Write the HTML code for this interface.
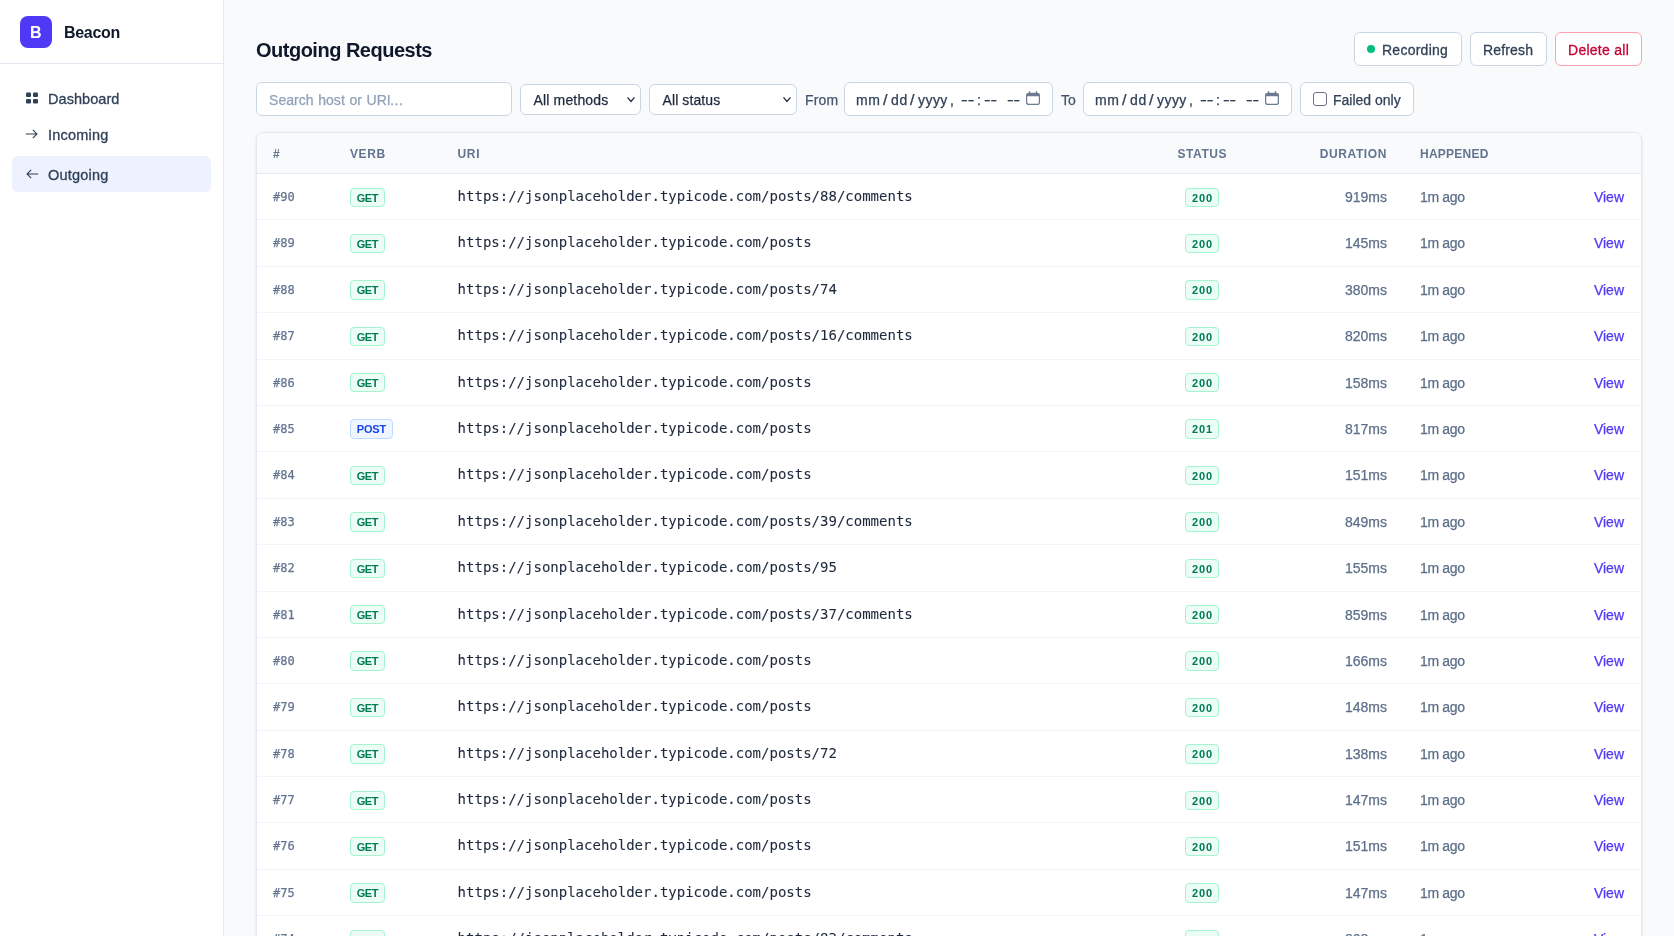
<!DOCTYPE html>
<html lang="en">
<head>
<meta charset="utf-8">
<title>Beacon – Outgoing Requests</title>
<style>
*{box-sizing:border-box;margin:0;padding:0}
html,body{width:1674px;height:936px;overflow:hidden}
body{background:#f8fafc;font-family:"Liberation Sans",sans-serif;color:#314158;position:relative;font-size:14px;-webkit-text-stroke:.25px}
.abs{position:absolute;white-space:nowrap}
/* sidebar */
.sidebar{position:absolute;left:0;top:0;width:224px;height:936px;background:#fff;border-right:1px solid #e2e8f0}
.brand{position:absolute;left:0;top:0;width:223px;height:64px;border-bottom:1px solid #e2e8f0}
.logo{position:absolute;left:20px;top:16px;width:32px;height:32px;border-radius:8px;background:#4f39f6;color:#fff;font-weight:700;font-size:16px;line-height:34px;text-align:center;text-indent:-0.5px}
.brandname{position:absolute;left:64px;top:21px;letter-spacing:-0.3px;height:24px;line-height:24px;font-size:16px;font-weight:700;color:#0f172b;white-space:nowrap}
.nav{position:absolute;left:12px;width:199px;height:36px;border-radius:6px;font-size:14px;font-weight:400;color:#314158}
.nav.active{background:#eef2ff}
.nav svg{position:absolute;left:13px;display:block}
.nav span{position:absolute;left:36px;top:0;height:36px;line-height:36px;white-space:nowrap;font-size:14.5px;letter-spacing:.2px;-webkit-text-stroke:0.3px #314158}
/* main */
main{position:absolute;left:224px;top:0;width:1450px;height:936px}
h1{position:absolute;left:32px;top:35px;letter-spacing:-0.5px;height:30px;line-height:30px;font-size:20px;font-weight:700;color:#0f172b;white-space:nowrap}
.btn{position:absolute;top:32px;height:34px;border:1px solid #cad5e2;border-radius:6px;background:#fff;font-size:14px;line-height:34px;color:#314158;white-space:nowrap}
.btn span{position:absolute;top:0;line-height:34px;-webkit-text-stroke:0.3px currentColor}
.btn.danger{border-color:#ffa1ad;color:#c70036}
.dot{position:absolute;left:12px;top:12px;width:8px;height:8px;border-radius:50%;background:#00bc7d}
.field{position:absolute;background:#fff;border:1px solid #cad5e2;border-radius:6px;font-size:14px;white-space:nowrap}
.field span{position:absolute;top:0;white-space:nowrap}
.lbl{position:absolute;top:83px;height:34px;line-height:34px;font-size:14px;color:#45556c;white-space:nowrap}
.chk{position:absolute;left:12px;top:9px;width:14px;height:14px;border:1px solid #746e80;border-radius:3px;background:#fff}
/* table */
.card{position:absolute;left:32px;top:132px;width:1386px;height:900px;background:#fff;border:1px solid #e2e8f0;border-radius:8px;overflow:hidden;box-shadow:0 1px 3px rgba(0,0,0,.1),0 1px 2px -1px rgba(0,0,0,.1)}
.thead{position:relative;height:41px;background:#f8fafc;border-bottom:1px solid #e2e8f0}
.th{position:absolute;top:1px;height:40px;line-height:41px;font-size:12px;font-weight:700;letter-spacing:.05em;text-transform:uppercase;color:#62748e;white-space:nowrap}
.tr{position:relative;height:46.4px;border-bottom:1px solid #f1f5f9}
.td{position:absolute;top:1px;height:45.4px;line-height:45.4px;white-space:nowrap}
.c-id{left:16px}
.td.c-id{font-family:"DejaVu Sans Mono","Liberation Mono",monospace;font-size:12px;color:#62748e}
.c-verb{left:93px}
.td.c-verb,.td.c-status{top:0}
.c-uri{left:200.6px}
.td.c-uri{top:0;-webkit-text-stroke:.08px;font-family:"DejaVu Sans Mono","Liberation Mono",monospace;font-size:14px;color:#1d293d}
.c-status{left:928px;width:34px}
.th.c-status{left:905px;width:80.6px;text-align:center}
.c-dur{right:254px;text-align:right}
.td.c-dur{color:#5d6f89;font-size:14px}
.c-hap{left:1163px}
.td.c-hap{color:#5d6f89;font-size:14px;letter-spacing:-0.35px}
.th.c-hap{letter-spacing:.02em}
.c-view{right:17px;color:#4f39f6;font-size:14px}
.badge{position:absolute;left:0;top:13.5px;height:19.33px;line-height:17.33px;padding:1.0px 6px 0;border:1px solid;border-radius:4px;font-family:"Liberation Sans",sans-serif;font-size:11px;font-weight:700}
.badge.get,.badge.st{background:#ecfdf5;border-color:#a4f4cf;color:#007a55}
.badge.post{background:#eff6ff;border-color:#bedbff;color:#1447e6}
.badge.get{width:35px;padding-left:0;padding-right:0;text-align:center;letter-spacing:-0.45px;text-indent:-0.45px}
.badge.post{width:43px;padding-left:0;padding-right:0;text-align:center;letter-spacing:-0.1px;text-indent:-0.1px}
.badge.st{width:34px;padding-left:1px;padding-right:0;text-align:center;letter-spacing:.8px}
.sidebar,main{will-change:transform}
.sx{display:inline-block;transform-origin:0 50%}
.logo,.brandname,h1,.th,.badge{-webkit-text-stroke:0}
</style>
</head>
<body>
<aside class="sidebar">
<div class="brand"><div class="logo">B</div><div class="brandname">Beacon</div></div>
<div class="nav" style="top:81px"><svg style="top:11px;left:14px" width="12" height="12" viewBox="0 0 12 12"><rect x="0" y="0.5" width="5" height="4.6" rx="1" fill="#314158"/><rect x="7" y="0.5" width="5" height="4.6" rx="1" fill="#314158"/><rect x="0" y="6.9" width="5" height="4.6" rx="1" fill="#314158"/><rect x="7" y="6.9" width="5" height="4.6" rx="1" fill="#314158"/></svg><span style="letter-spacing:.05px">Dashboard</span></div>
<div class="nav" style="top:117px"><svg style="top:11px" width="13" height="12" viewBox="0 0 13 12"><path d="M0.8 6H12M7.8 1.8L12 6L7.8 10.2" fill="none" stroke="#314158" stroke-width="1.1"/></svg><span>Incoming</span></div>
<div class="nav active" style="top:156px"><svg style="top:12px;left:13.7px" width="13" height="12" viewBox="0 0 13 12"><path d="M12.2 6H1M5.2 1.8L1 6L5.2 10.2" fill="none" stroke="#314158" stroke-width="1.1"/></svg><span style="top:1px">Outgoing</span></div>
</aside>
<main>
<h1>Outgoing Requests</h1>
<div class="btn" style="left:1130px;width:108px"><i class="dot"></i><span style="left:27px;letter-spacing:.25px">Recording</span></div>
<div class="btn" style="left:1246px;width:77px"><span style="left:12px;letter-spacing:.15px">Refresh</span></div>
<div class="btn danger" style="left:1331px;width:87px"><span style="left:12px;letter-spacing:.27px">Delete all</span></div>
<div class="field" style="left:32px;top:82px;width:256px;height:34px"><span style="left:12px;line-height:34px;color:#90a1b9;word-spacing:.6px;letter-spacing:.05px">Search host or URI<span class="sx" style="position:static;margin-left:-1.2px;letter-spacing:-1.5px">…</span></span></div>
<div class="field" style="left:296px;top:84px;width:121px;height:31px"><span style="left:12.5px;line-height:31px;color:#1d293d;letter-spacing:.16px">All methods</span><svg class="abs" style="left:106px;top:11px" width="8" height="7" viewBox="0 0 8 7"><path d="M0.5 1.4L4 5.4L7.5 1.4" fill="none" stroke="#1d293d" stroke-width="1.3"/></svg></div>
<div class="field" style="left:425px;top:84px;width:148px;height:31px"><span style="left:12.5px;line-height:31px;color:#1d293d;letter-spacing:.1px">All status</span><svg class="abs" style="left:133px;top:11px" width="8" height="7" viewBox="0 0 8 7"><path d="M0.5 1.4L4 5.4L7.5 1.4" fill="none" stroke="#1d293d" stroke-width="1.3"/></svg></div>
<span class="lbl" style="left:581px;letter-spacing:.2px">From</span>
<div class="field date" style="left:620px;top:82px;width:209px;height:34px"><span style="left:11px;line-height:34px;letter-spacing:.5px">mm</span><span class="sx" style="left:38px;line-height:34px;transform:scaleX(1.15)">/</span><span style="left:46px;line-height:34px;letter-spacing:.7px">dd</span><span class="sx" style="left:65px;line-height:34px;transform:scaleX(1.15)">/</span><span style="left:73px;line-height:34px;letter-spacing:.45px">yyyy</span><span style="left:105px;line-height:34px">,</span><span class="sx" style="left:115.8px;line-height:34px;transform:scaleX(1.45)">--</span><span style="left:132px;line-height:34px">:</span><span class="sx" style="left:138.5px;line-height:34px;transform:scaleX(1.4)">--</span><span class="sx" style="left:161.5px;line-height:34px;transform:scaleX(1.4)">--</span><svg class="abs" style="left:181px;top:8px" width="14" height="14" viewBox="0 0 14 14"><rect x="0.6" y="2.4" width="12.8" height="11" rx="2.2" fill="none" stroke="#6a7b92" stroke-width="1.2"/><path d="M0.6 5.2V4.6a2.2 2.2 0 0 1 2.2-2.2h8.4a2.2 2.2 0 0 1 2.2 2.2v0.6z" fill="#6a7b92"/><path d="M3.5 0.3v2.6M10.5 0.3v2.6" stroke="#6a7b92" stroke-width="1.3"/></svg></div>
<span class="lbl" style="left:837px">To</span>
<div class="field date" style="left:859px;top:82px;width:209px;height:34px"><span style="left:11px;line-height:34px;letter-spacing:.5px">mm</span><span class="sx" style="left:38px;line-height:34px;transform:scaleX(1.15)">/</span><span style="left:46px;line-height:34px;letter-spacing:.7px">dd</span><span class="sx" style="left:65px;line-height:34px;transform:scaleX(1.15)">/</span><span style="left:73px;line-height:34px;letter-spacing:.45px">yyyy</span><span style="left:105px;line-height:34px">,</span><span class="sx" style="left:115.8px;line-height:34px;transform:scaleX(1.45)">--</span><span style="left:132px;line-height:34px">:</span><span class="sx" style="left:138.5px;line-height:34px;transform:scaleX(1.4)">--</span><span class="sx" style="left:161.5px;line-height:34px;transform:scaleX(1.4)">--</span><svg class="abs" style="left:181px;top:8px" width="14" height="14" viewBox="0 0 14 14"><rect x="0.6" y="2.4" width="12.8" height="11" rx="2.2" fill="none" stroke="#6a7b92" stroke-width="1.2"/><path d="M0.6 5.2V4.6a2.2 2.2 0 0 1 2.2-2.2h8.4a2.2 2.2 0 0 1 2.2 2.2v0.6z" fill="#6a7b92"/><path d="M3.5 0.3v2.6M10.5 0.3v2.6" stroke="#6a7b92" stroke-width="1.3"/></svg></div>
<div class="field" style="left:1076px;top:82px;width:114px;height:34px"><i class="chk"></i><span style="left:32px;line-height:34px;color:#314158">Failed only</span></div>
<div class="card">
<div class="thead"><span class="th c-id">#</span><span class="th c-verb">Verb</span><span class="th c-uri">URI</span><span class="th c-status">Status</span><span class="th c-dur">Duration</span><span class="th c-hap">Happened</span></div>
<div class="tr"><span class="td c-id">#90</span><span class="td c-verb"><span class="badge get">GET</span></span><span class="td c-uri">https://jsonplaceholder.typicode.com/posts/88/comments</span><span class="td c-status"><span class="badge st">200</span></span><span class="td c-dur">919ms</span><span class="td c-hap">1m ago</span><a class="td c-view">View</a></div>
<div class="tr"><span class="td c-id">#89</span><span class="td c-verb"><span class="badge get">GET</span></span><span class="td c-uri">https://jsonplaceholder.typicode.com/posts</span><span class="td c-status"><span class="badge st">200</span></span><span class="td c-dur">145ms</span><span class="td c-hap">1m ago</span><a class="td c-view">View</a></div>
<div class="tr"><span class="td c-id">#88</span><span class="td c-verb"><span class="badge get">GET</span></span><span class="td c-uri">https://jsonplaceholder.typicode.com/posts/74</span><span class="td c-status"><span class="badge st">200</span></span><span class="td c-dur">380ms</span><span class="td c-hap">1m ago</span><a class="td c-view">View</a></div>
<div class="tr"><span class="td c-id">#87</span><span class="td c-verb"><span class="badge get">GET</span></span><span class="td c-uri">https://jsonplaceholder.typicode.com/posts/16/comments</span><span class="td c-status"><span class="badge st">200</span></span><span class="td c-dur">820ms</span><span class="td c-hap">1m ago</span><a class="td c-view">View</a></div>
<div class="tr"><span class="td c-id">#86</span><span class="td c-verb"><span class="badge get">GET</span></span><span class="td c-uri">https://jsonplaceholder.typicode.com/posts</span><span class="td c-status"><span class="badge st">200</span></span><span class="td c-dur">158ms</span><span class="td c-hap">1m ago</span><a class="td c-view">View</a></div>
<div class="tr"><span class="td c-id">#85</span><span class="td c-verb"><span class="badge post">POST</span></span><span class="td c-uri">https://jsonplaceholder.typicode.com/posts</span><span class="td c-status"><span class="badge st">201</span></span><span class="td c-dur">817ms</span><span class="td c-hap">1m ago</span><a class="td c-view">View</a></div>
<div class="tr"><span class="td c-id">#84</span><span class="td c-verb"><span class="badge get">GET</span></span><span class="td c-uri">https://jsonplaceholder.typicode.com/posts</span><span class="td c-status"><span class="badge st">200</span></span><span class="td c-dur">151ms</span><span class="td c-hap">1m ago</span><a class="td c-view">View</a></div>
<div class="tr"><span class="td c-id">#83</span><span class="td c-verb"><span class="badge get">GET</span></span><span class="td c-uri">https://jsonplaceholder.typicode.com/posts/39/comments</span><span class="td c-status"><span class="badge st">200</span></span><span class="td c-dur">849ms</span><span class="td c-hap">1m ago</span><a class="td c-view">View</a></div>
<div class="tr"><span class="td c-id">#82</span><span class="td c-verb"><span class="badge get">GET</span></span><span class="td c-uri">https://jsonplaceholder.typicode.com/posts/95</span><span class="td c-status"><span class="badge st">200</span></span><span class="td c-dur">155ms</span><span class="td c-hap">1m ago</span><a class="td c-view">View</a></div>
<div class="tr"><span class="td c-id">#81</span><span class="td c-verb"><span class="badge get">GET</span></span><span class="td c-uri">https://jsonplaceholder.typicode.com/posts/37/comments</span><span class="td c-status"><span class="badge st">200</span></span><span class="td c-dur">859ms</span><span class="td c-hap">1m ago</span><a class="td c-view">View</a></div>
<div class="tr"><span class="td c-id">#80</span><span class="td c-verb"><span class="badge get">GET</span></span><span class="td c-uri">https://jsonplaceholder.typicode.com/posts</span><span class="td c-status"><span class="badge st">200</span></span><span class="td c-dur">166ms</span><span class="td c-hap">1m ago</span><a class="td c-view">View</a></div>
<div class="tr"><span class="td c-id">#79</span><span class="td c-verb"><span class="badge get">GET</span></span><span class="td c-uri">https://jsonplaceholder.typicode.com/posts</span><span class="td c-status"><span class="badge st">200</span></span><span class="td c-dur">148ms</span><span class="td c-hap">1m ago</span><a class="td c-view">View</a></div>
<div class="tr"><span class="td c-id">#78</span><span class="td c-verb"><span class="badge get">GET</span></span><span class="td c-uri">https://jsonplaceholder.typicode.com/posts/72</span><span class="td c-status"><span class="badge st">200</span></span><span class="td c-dur">138ms</span><span class="td c-hap">1m ago</span><a class="td c-view">View</a></div>
<div class="tr"><span class="td c-id">#77</span><span class="td c-verb"><span class="badge get">GET</span></span><span class="td c-uri">https://jsonplaceholder.typicode.com/posts</span><span class="td c-status"><span class="badge st">200</span></span><span class="td c-dur">147ms</span><span class="td c-hap">1m ago</span><a class="td c-view">View</a></div>
<div class="tr"><span class="td c-id">#76</span><span class="td c-verb"><span class="badge get">GET</span></span><span class="td c-uri">https://jsonplaceholder.typicode.com/posts</span><span class="td c-status"><span class="badge st">200</span></span><span class="td c-dur">151ms</span><span class="td c-hap">1m ago</span><a class="td c-view">View</a></div>
<div class="tr"><span class="td c-id">#75</span><span class="td c-verb"><span class="badge get">GET</span></span><span class="td c-uri">https://jsonplaceholder.typicode.com/posts</span><span class="td c-status"><span class="badge st">200</span></span><span class="td c-dur">147ms</span><span class="td c-hap">1m ago</span><a class="td c-view">View</a></div>
<div class="tr"><span class="td c-id">#74</span><span class="td c-verb"><span class="badge get">GET</span></span><span class="td c-uri">https://jsonplaceholder.typicode.com/posts/83/comments</span><span class="td c-status"><span class="badge st">200</span></span><span class="td c-dur">808ms</span><span class="td c-hap">1m ago</span><a class="td c-view">View</a></div>
</div>
</main>
</body>
</html>
